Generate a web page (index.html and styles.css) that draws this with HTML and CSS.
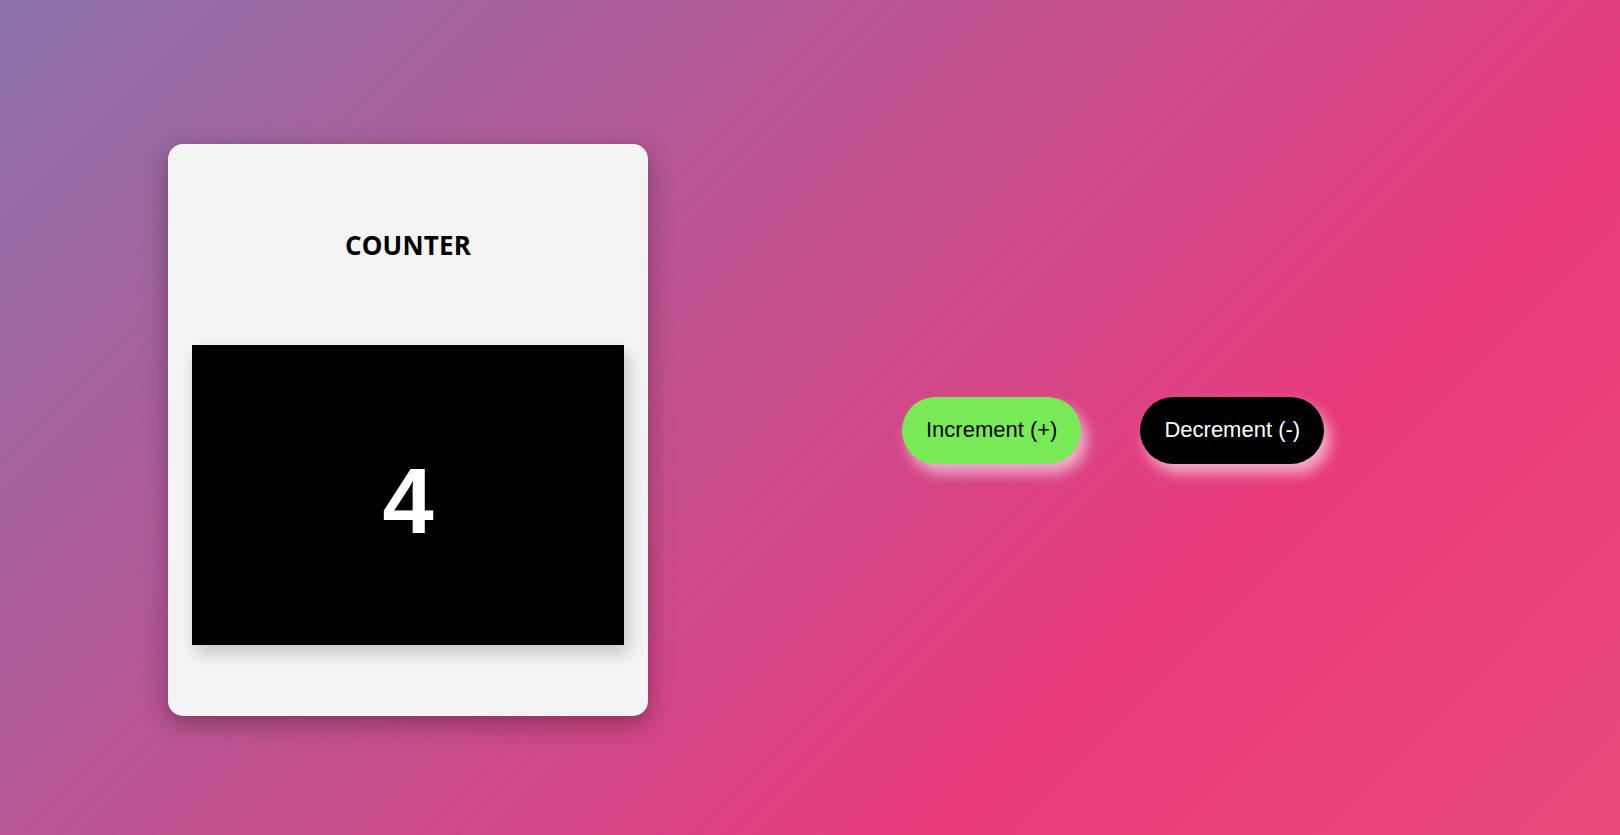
FILE: index.html
```html
<!DOCTYPE html>
<html lang="en">
<head>
<meta charset="utf-8">
<title>Counter</title>
<link rel="stylesheet" href="styles.css">
</head>
<body>
<main class="page">
  <section class="card">
    <h2 class="card-title">COUNTER</h2>
    <div class="display"><span class="count">4</span></div>
  </section>
  <div class="controls">
    <button class="btn btn-inc" type="button">Increment (+)</button>
    <button class="btn btn-dec" type="button">Decrement (-)</button>
  </div>
</main>
</body>
</html>
```

FILE: styles.css
```css
html, body {
  margin: 0;
  padding: 0;
}
body {
  min-height: 100vh;
  background: linear-gradient(135deg, #8b71ab 0%, #e83a7b 72%, #e8497a 100%);
  font-family: "Liberation Sans", Arial, sans-serif;
  overflow: hidden;
}
.page {
  box-sizing: border-box;
  height: 835px;
  padding: 25px 0 0 168px;
  display: flex;
  align-items: center;
  gap: 254px;
}
.card {
  box-sizing: border-box;
  width: 480px;
  height: 572px;
  padding: 84px 24px 0;
  background: #f4f4f4;
  border-radius: 15px;
  box-shadow: 0 8px 24px rgba(0, 0, 0, 0.32);
  display: flex;
  flex-direction: column;
}
.card-title {
  margin: 0 0 83px;
  font-family: "Open Sans", "Noto Sans", sans-serif;
  font-weight: 700;
  font-size: 26px;
  line-height: 34px;
  letter-spacing: 0.2px;
  text-align: center;
  color: #000;
}
.display {
  box-sizing: border-box;
  height: 300px;
  padding-top: 12px;
  background: #000;
  display: flex;
  align-items: center;
  justify-content: center;
  box-shadow: 4px 8px 16px rgba(0, 0, 0, 0.2);
}
.count {
  font-family: "Liberation Sans", Arial, sans-serif;
  font-weight: 700;
  font-size: 92px;
  color: #fff;
}
.controls {
  display: flex;
  gap: 59px;
}
.btn {
  height: 67px;
  padding: 0 24px;
  border: none;
  border-radius: 34px;
  font-family: "Liberation Sans", Arial, sans-serif;
  font-size: 22px;
  box-shadow: 6px 9px 14px rgba(255, 255, 255, 0.6);
  cursor: pointer;
}
.btn-inc {
  background: #78ea58;
  color: #000;
}
.btn-dec {
  background: #000;
  color: #fff;
}
```
